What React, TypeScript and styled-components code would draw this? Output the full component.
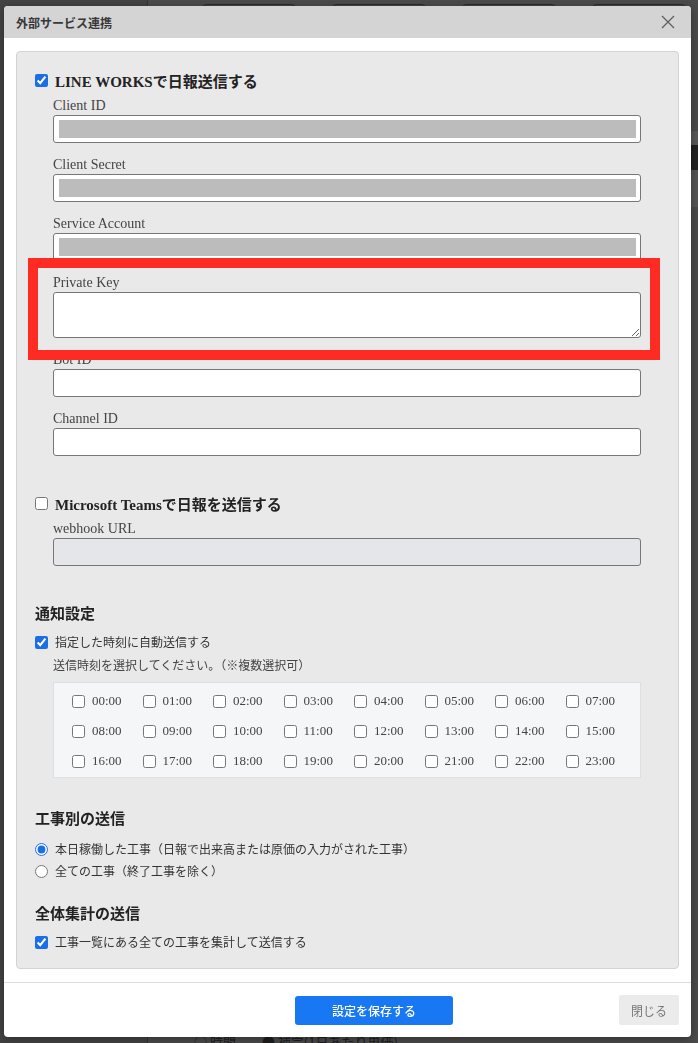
import React, { useState } from "react";
import styled, { createGlobalStyle, css } from "styled-components";

const GlobalStyle = createGlobalStyle`
  html, body {
    margin: 0;
    padding: 0;
    background: #4a4a4a;
    font-family: "Liberation Serif", "Noto Sans CJK JP", serif;
    overflow: hidden;
  }
  * {
    box-sizing: border-box;
  }
`;

/* ---------- page behind the dialog ---------- */

const Backdrop = styled.div`
  display: flex;
  height: 100vh;
  overflow: hidden;
`;

const Sidebar = styled.div`
  width: 148px;
  background: #434343;
  border-right: 1px solid #333;
`;

const PageMain = styled.div`
  flex: 1;
  display: flex;
  flex-direction: column;
  background: #4b4b4b;
`;

const Toolbar = styled.div`
  display: flex;
  gap: 34px;
  padding: 4px 0 0 53px;
`;

const ToolButton = styled.div`
  width: 96px;
  height: 30px;
  border: 1px solid #2c2c2c;
  border-radius: 6px;
  background: #444;
`;

const Band = styled.div<{ $h: number; $bg: string; $mt?: number }>`
  height: ${(p) => p.$h}px;
  background: ${(p) => p.$bg};
  margin-top: ${(p) => p.$mt ?? 0}px;
`;

const PageFootRow = styled.div`
  margin-top: auto;
  margin-bottom: -8px;
  padding-left: 46px;
  font-family: "Noto Sans CJK JP", sans-serif;
  font-size: 13px;
  line-height: 18px;
  color: #1e1e1e;
  white-space: nowrap;
`;

/* ---------- dialog ---------- */

const Modal = styled.div`
  position: fixed;
  top: 6px;
  left: 4px;
  width: 687px;
  height: 1031px;
  background: #fff;
  border-radius: 4px;
  overflow: hidden;
  display: flex;
  flex-direction: column;
  box-shadow: 0 2px 10px rgba(0, 0, 0, 0.35);
`;

const ModalHeader = styled.div`
  height: 32px;
  flex-shrink: 0;
  display: flex;
  align-items: center;
  justify-content: space-between;
  padding: 0 16px 0 12px;
  background: #d4d4d4;
`;

const ModalTitle = styled.h1`
  margin: 0;
  font-family: "Noto Sans CJK JP", sans-serif;
  font-size: 12px;
  font-weight: 700;
  color: #383838;
`;

const CloseButton = styled.button`
  display: flex;
  padding: 0;
  border: none;
  background: transparent;
  cursor: pointer;
`;

const ModalBody = styled.div`
  padding: 13px 12px;
  border-bottom: 1px solid #dedede;
`;

const Panel = styled.div`
  background: #e9e9e9;
  border: 1px solid #d3d3d3;
  border-radius: 4px;
  padding: 17px 18px 15px;
`;

const CheckRow = styled.label<{ $mt?: number; $strong?: boolean }>`
  display: flex;
  align-items: center;
  gap: 7px;
  height: 22px;
  margin-top: ${(p) => p.$mt ?? 0}px;
  color: #333;
  font-size: 12px;
  cursor: pointer;

  ${(p) =>
    p.$strong &&
    css`
      font-size: 15px;
      font-weight: 700;
      color: #222;
    `}
`;

const Check = styled.input`
  width: 13px;
  height: 13px;
  margin: 0;
  flex-shrink: 0;
  accent-color: #1a6fe6;
`;

const Fields = styled.div<{ $mt?: number }>`
  display: flex;
  flex-direction: column;
  gap: 13px;
  margin: ${(p) => p.$mt ?? 6}px 19px 0 18px;
`;

const Field = styled.div`
  display: flex;
  flex-direction: column;
`;

const FieldLabel = styled.label`
  font-size: 14px;
  line-height: 18px;
  color: #444;
`;

const inputBase = css`
  width: 100%;
  border: 1px solid #777;
  border-radius: 3px;
  background: #fff;
  font: inherit;
  outline: none;
`;

const TextInput = styled.input<{ $redacted?: boolean }>`
  ${inputBase}
  height: 28px;
  padding: 0 6px;

  ${(p) =>
    p.$redacted &&
    css`
      background: linear-gradient(#bcbcbc, #bcbcbc) center / calc(100% - 9px)
          18px no-repeat,
        #fff;
    `}

  &:disabled {
    background: #e4e6e9;
  }
`;

const TextArea = styled.textarea`
  ${inputBase}
  display: block;
  height: 46px;
  padding: 4px 6px;
`;

const Heading = styled.h2<{ $mt: number }>`
  margin: ${(p) => p.$mt}px 0 0;
  font-family: "Noto Sans CJK JP", sans-serif;
  font-size: 15px;
  font-weight: 700;
  line-height: 20px;
  color: #222;
`;

const Hint = styled.p`
  margin: 3px 0 0 18px;
  font-family: "Noto Sans CJK JP", sans-serif;
  font-size: 12px;
  line-height: 18px;
  color: #444;
`;

const TimeBox = styled.div`
  display: grid;
  grid-template-columns: repeat(8, 1fr);
  grid-auto-rows: 30px;
  margin: 8px 19px 0 18px;
  padding: 3px 4px 1px 18px;
  background: #f5f6f8;
  border: 1px solid #dcdfe3;
`;

const TimeItem = styled.label`
  display: flex;
  align-items: center;
  gap: 7px;
  font-size: 13px;
  color: #444;
  cursor: pointer;
`;

const RadioGroup = styled.div`
  margin-top: 10px;
`;

const RadioRow = styled.label`
  display: flex;
  align-items: center;
  gap: 7px;
  height: 22px;
  font-size: 12px;
  color: #333;
  cursor: pointer;
`;

const Radio = styled.input`
  width: 13px;
  height: 13px;
  margin: 0;
  accent-color: #1a6fe6;
`;

const ModalFooter = styled.div`
  display: grid;
  grid-template-columns: 279px 158px 1fr;
  align-items: center;
  padding: 12px;
`;

const SaveButton = styled.button`
  grid-column: 2;
  height: 29px;
  border: none;
  border-radius: 3px;
  background: #1877f2;
  color: #fff;
  font-family: "Noto Sans CJK JP", sans-serif;
  font-size: 12px;
  font-weight: 500;
  cursor: pointer;
`;

const CloseFooterButton = styled.button`
  justify-self: end;
  width: 60px;
  height: 30px;
  border: none;
  border-radius: 2px;
  background: #ebebeb;
  color: #777;
  font-family: "Noto Sans CJK JP", sans-serif;
  font-size: 12px;
  cursor: pointer;
`;

const Highlight = styled.div`
  position: absolute;
  top: 252px;
  left: 24px;
  width: 632px;
  height: 102px;
  border: 10px solid #fd2b21;
  pointer-events: none;
`;

const hours = Array.from({ length: 24 }, (_, i) => `${String(i).padStart(2, "0")}:00`);

const lineFields = [
  { label: "Client ID", redacted: true },
  { label: "Client Secret", redacted: true },
  { label: "Service Account", redacted: true },
];

const App = () => {
  const [lineOn, setLineOn] = useState(true);
  const [teamsOn, setTeamsOn] = useState(false);
  const [autoSend, setAutoSend] = useState(true);
  const [totalSend, setTotalSend] = useState(true);
  const [scope, setScope] = useState("today");
  const [picked, setPicked] = useState<string[]>([]);

  const toggleHour = (h: string) =>
    setPicked((prev) => (prev.includes(h) ? prev.filter((x) => x !== h) : [...prev, h]));

  return (
    <>
      <GlobalStyle />
      <Backdrop>
        <Sidebar />
        <PageMain>
          <Toolbar>
            <ToolButton />
            <ToolButton />
            <ToolButton />
            <ToolButton />
          </Toolbar>
          <Band $h={14} $bg="#585858" $mt={97} />
          <Band $h={25} $bg="#212121" />
          <Band $h={37} $bg="#555" />
          <PageFootRow>○ 時間　　● 補完(1日あたり単価)</PageFootRow>
        </PageMain>
      </Backdrop>

      <Modal>
        <ModalHeader>
          <ModalTitle>外部サービス連携</ModalTitle>
          <CloseButton aria-label="close">
            <svg width="14" height="14" viewBox="0 0 14 14">
              <path d="M1 1L13 13M13 1L1 13" stroke="#606060" strokeWidth="1.3" />
            </svg>
          </CloseButton>
        </ModalHeader>

        <ModalBody>
          <Panel>
            <CheckRow $strong>
              <Check type="checkbox" checked={lineOn} onChange={() => setLineOn(!lineOn)} />
              LINE WORKSで日報送信する
            </CheckRow>
            <Fields>
              {lineFields.map((f) => (
                <Field key={f.label}>
                  <FieldLabel>{f.label}</FieldLabel>
                  <TextInput $redacted={f.redacted} readOnly />
                </Field>
              ))}
              <Field>
                <FieldLabel>Private Key</FieldLabel>
                <TextArea />
              </Field>
              <Field>
                <FieldLabel>Bot ID</FieldLabel>
                <TextInput />
              </Field>
              <Field>
                <FieldLabel>Channel ID</FieldLabel>
                <TextInput />
              </Field>
            </Fields>

            <CheckRow $strong $mt={36}>
              <Check type="checkbox" checked={teamsOn} onChange={() => setTeamsOn(!teamsOn)} />
              Microsoft Teamsで日報を送信する
            </CheckRow>
            <Fields>
              <Field>
                <FieldLabel>webhook URL</FieldLabel>
                <TextInput disabled={!teamsOn} />
              </Field>
            </Fields>

            <Heading $mt={37}>通知設定</Heading>
            <CheckRow $mt={8}>
              <Check type="checkbox" checked={autoSend} onChange={() => setAutoSend(!autoSend)} />
              指定した時刻に自動送信する
            </CheckRow>
            <Hint>送信時刻を選択してください。（※複数選択可）</Hint>
            <TimeBox>
              {hours.map((h) => (
                <TimeItem key={h}>
                  <Check type="checkbox" checked={picked.includes(h)} onChange={() => toggleHour(h)} />
                  {h}
                </TimeItem>
              ))}
            </TimeBox>

            <Heading $mt={30}>工事別の送信</Heading>
            <RadioGroup>
              <RadioRow>
                <Radio
                  type="radio"
                  name="scope"
                  checked={scope === "today"}
                  onChange={() => setScope("today")}
                />
                本日稼働した工事（日報で出来高または原価の入力がされた工事）
              </RadioRow>
              <RadioRow>
                <Radio
                  type="radio"
                  name="scope"
                  checked={scope === "all"}
                  onChange={() => setScope("all")}
                />
                全ての工事（終了工事を除く）
              </RadioRow>
            </RadioGroup>

            <Heading $mt={21}>全体集計の送信</Heading>
            <CheckRow $mt={8}>
              <Check type="checkbox" checked={totalSend} onChange={() => setTotalSend(!totalSend)} />
              工事一覧にある全ての工事を集計して送信する
            </CheckRow>
          </Panel>
        </ModalBody>

        <ModalFooter>
          <SaveButton>設定を保存する</SaveButton>
          <CloseFooterButton>閉じる</CloseFooterButton>
        </ModalFooter>

        <Highlight />
      </Modal>
    </>
  );
};

export default App;
